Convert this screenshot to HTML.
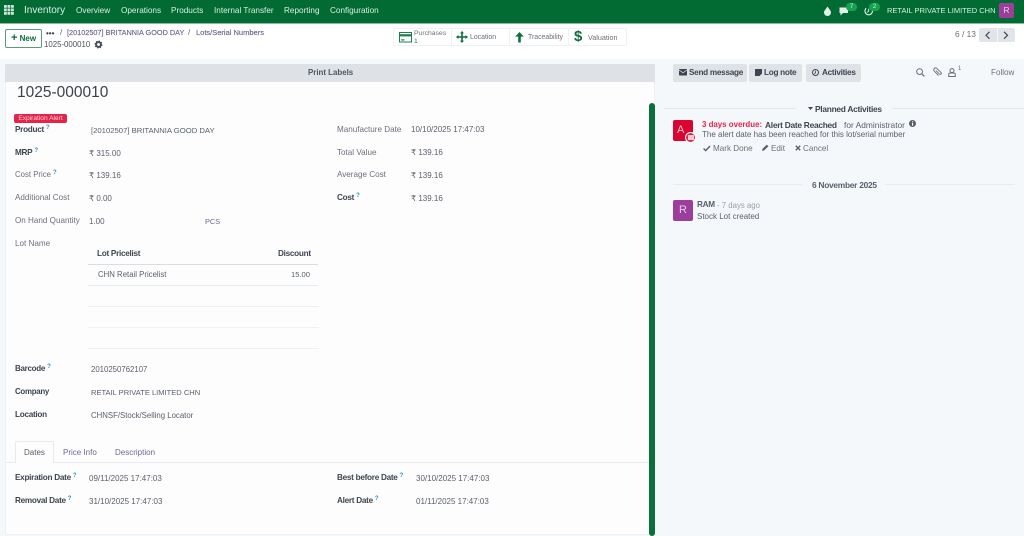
<!DOCTYPE html>
<html><head><meta charset="utf-8"><style>
html,body{margin:0;padding:0;width:1024px;height:536px;overflow:hidden;background:#f5f8fb;font-family:"Liberation Sans",sans-serif;font-size:8px;color:#5a606b}
.a,.t{position:absolute;white-space:nowrap}
.t{line-height:12px}
.k{margin-top:1px}
.b{font-weight:bold;color:#3f4550;font-size:8.2px;letter-spacing:-.28px}
.g{color:#6b7079;font-size:8.1px}
.n{color:#d9efe3;font-size:8.2px}
.c{color:#6f6791;font-size:7.3px;-webkit-text-stroke:.15px #6f6791}
.q{color:#2a8fbd;font-size:6px;font-weight:bold;position:relative;top:-3px;margin-left:2px;letter-spacing:0}
.l{position:absolute;height:1px}
.btn{position:absolute;background:#dfe3e7;border-radius:2px;height:18px;top:64px}
svg{position:absolute;overflow:visible}
</style></head><body>
<!-- navbar -->
<div class="a" style="left:0;top:0;width:1024px;height:23px;background:#026b34"></div>
<div class="l" style="left:0;top:23px;width:1024px;background:#8fb7a0"></div>
<svg style="left:4px;top:5px" width="10" height="10"><g fill="#cfe6d8"><rect x="0" y="0" width="2.8" height="2.8"/><rect x="3.5" y="0" width="2.8" height="2.8"/><rect x="7" y="0" width="2.8" height="2.8"/><rect x="0" y="3.5" width="2.8" height="2.8"/><rect x="3.5" y="3.5" width="2.8" height="2.8"/><rect x="7" y="3.5" width="2.8" height="2.8"/><rect x="0" y="7" width="2.8" height="2.8"/><rect x="3.5" y="7" width="2.8" height="2.8"/><rect x="7" y="7" width="2.8" height="2.8"/></g></svg>
<span class="t n" style="left:24px;top:5px;font-size:10px">Inventory</span>
<span class="t n" style="left:76px;top:5px">Overview</span>
<span class="t n" style="left:121px;top:5px">Operations</span>
<span class="t n" style="left:171px;top:5px">Products</span>
<span class="t n" style="left:214px;top:5px">Internal Transfer</span>
<span class="t n" style="left:284px;top:5px">Reporting</span>
<span class="t n" style="left:330px;top:5px">Configuration</span>
<svg style="left:824px;top:6px" width="8" height="10"><path d="M3.5 0.5C5 3 7 4.5 7 6.5A3.5 3.5 0 0 1 0 6.5C0 4.5 2 3 3.5 0.5Z" fill="#e4f1ea"/></svg>
<svg style="left:839px;top:6px" width="10" height="10"><path d="M0.5 1.5H9V7H4L1.5 9.5V7H0.5Z" fill="#e4f1ea"/></svg>
<div class="a" style="left:846px;top:3px;width:11px;height:8px;border-radius:4px;background:#14a34f;color:#d9efe3;font-size:6px;line-height:8px;text-align:center">7</div>
<svg style="left:864px;top:6px" width="10" height="10"><circle cx="4.7" cy="5" r="3.8" fill="none" stroke="#e4f1ea" stroke-width="1.1" stroke-dasharray="15 4"/><path d="M4.7 2.8V5.2L3 6.4" fill="none" stroke="#e4f1ea" stroke-width="0.9"/></svg>
<div class="a" style="left:869px;top:3px;width:11px;height:8px;border-radius:4px;background:#14a34f;color:#d9efe3;font-size:6px;line-height:8px;text-align:center">2</div>
<span class="t n" style="left:887px;top:5px;font-size:7.5px">RETAIL PRIVATE LIMITED CHN</span>
<div class="a" style="left:999px;top:3px;width:15px;height:15px;border-radius:2px;background:#9c3e9b;color:#e8cfe8;font-size:8.5px;line-height:15px;text-align:center">R</div>
<!-- control panel -->
<div class="a" style="left:0;top:24px;width:1024px;height:35px;background:#fff"></div>
<div class="a" style="left:5px;top:29px;width:37px;height:19px;box-sizing:border-box;border:1px solid #5b9a78;border-radius:2px;background:#fff;color:#0d6b3a;font-weight:bold;font-size:8px;line-height:17px;text-align:center"><span style="font-size:11px;line-height:10px">+</span> New</div>
<span class="t b" style="left:46px;top:28px;font-size:8px;letter-spacing:0">•••</span>
<span class="t" style="left:60px;top:27px;color:#666">/</span>
<span class="t c" style="left:67px;top:27px">[20102507] BRITANNIA GOOD DAY</span>
<span class="t" style="left:188px;top:27px;color:#666">/</span>
<span class="t c" style="left:196px;top:27px;font-size:7.5px">Lots/Serial Numbers</span>
<span class="t" style="left:44px;top:39px;font-size:7.85px;color:#4b515c">1025-000010</span>
<svg style="left:95px;top:41px" width="8" height="8"><circle cx="3.5" cy="3.5" r="2.4" fill="none" stroke="#454b55" stroke-width="1.9"/><circle cx="3.5" cy="3.5" r="3.5" fill="none" stroke="#454b55" stroke-width="1" stroke-dasharray="1.4 1.35"/></svg>
<!-- stat buttons -->
<div class="a" style="left:393px;top:28px;width:234px;height:18px;box-sizing:border-box;border:1px solid #eef1f4;border-radius:2px"></div>
<div class="a" style="left:451px;top:28px;width:1px;height:18px;background:#eef1f4"></div>
<div class="a" style="left:509px;top:28px;width:1px;height:18px;background:#eef1f4"></div>
<div class="a" style="left:568px;top:28px;width:1px;height:18px;background:#eef1f4"></div>
<svg style="left:399px;top:32px" width="13" height="11"><rect x="0.5" y="0.5" width="12" height="9.5" fill="none" stroke="#1c7c4c"/><rect x="0.5" y="2.2" width="12" height="2.2" fill="#1c7c4c"/><rect x="2" y="7.3" width="3.5" height="1.2" fill="#1c7c4c"/></svg>
<span class="t" style="left:414px;top:30px;font-size:6.8px;line-height:8px;color:#6b7079">Purchases<br><span style="color:#1c7c4c">1</span></span>
<svg style="left:456px;top:31px" width="12" height="12"><path d="M6 0L8 2.4H6.8V5.2H9.6V4L12 6L9.6 8V6.8H6.8V9.6H8L6 12L4 9.6H5.2V6.8H2.4V8L0 6L2.4 4V5.2H5.2V2.4H4Z" fill="#0f6d3e"/></svg>
<span class="t g" style="left:470px;top:32px;font-size:6.9px">Location</span>
<svg style="left:515px;top:32px" width="9" height="11"><path d="M4.5 0L8.8 4.6H5.8V10.5H3.2V4.6H0.2Z" fill="#0f6d3e"/></svg>
<span class="t g" style="left:528px;top:32px;font-size:6.9px">Traceability</span>
<span class="t" style="left:574px;top:29px;color:#0f6d3e;font-size:15px;line-height:16px;font-weight:bold">$</span>
<span class="t g" style="left:588px;top:32px;font-size:7.2px">Valuation</span>
<!-- pager -->
<span class="t g" style="left:955px;top:28px;font-size:8.4px">6 / 13</span>
<div class="a" style="left:979px;top:28px;width:36px;height:14px;background:#e1e5e9;border-radius:2px"></div>
<div class="a" style="left:997px;top:28px;width:1px;height:14px;background:#f4f6f8"></div>
<svg style="left:985px;top:31px" width="6" height="9"><path d="M4.5 0.8L1 4.3L4.5 7.8" fill="none" stroke="#454b55" stroke-width="1.2"/></svg>
<svg style="left:1003px;top:31px" width="6" height="9"><path d="M1 0.8L4.5 4.3L1 7.8" fill="none" stroke="#454b55" stroke-width="1.2"/></svg>
<!-- sheet -->
<div class="a" style="left:5px;top:64px;width:650px;height:471px;background:#fdfdfd;box-sizing:border-box;border:1px solid #eef0f3;border-top:0"></div>
<div class="a" style="left:5px;top:64px;width:650px;height:18px;background:#dee2e6;border-radius:2px 2px 0 0"></div>
<span class="t" style="left:308px;top:67px;font-weight:bold;color:#4f555f;font-size:7.9px">Print Labels</span>
<span class="t k" style="left:17px;top:82px;font-size:15.5px;line-height:20px;color:#3c424c">1025-000010</span>
<div class="a" style="left:14px;top:114px;width:53px;height:9px;border-radius:2px;background:#e8234a;color:#ffd9e0;font-size:6.6px;line-height:9px;text-align:center">Expiration Alert</div>
<!-- left group -->
<span class="t b" style="left:15px;top:124px">Product<span class="q">?</span></span>
<span class="t" style="left:91px;top:125px;font-size:7.7px">[20102507] BRITANNIA GOOD DAY</span>
<span class="t b" style="left:15px;top:147px">MRP<span class="q">?</span></span>
<span class="t" style="left:89px;top:148px">₹ 315.00</span>
<span class="t g" style="left:15px;top:169px;font-size:7.8px">Cost Price<span class="q">?</span></span>
<span class="t" style="left:89px;top:170px">₹ 139.16</span>
<span class="t g" style="left:15px;top:192px">Additional Cost</span>
<span class="t" style="left:89px;top:193px">₹ 0.00</span>
<span class="t g" style="left:15px;top:215px">On Hand Quantity</span>
<span class="t" style="left:89px;top:216px">1.00</span>
<span class="t" style="left:205px;top:216px;color:#6f6791;font-size:7.4px">PCS</span>
<span class="t g" style="left:15px;top:238px">Lot Name</span>
<!-- table -->
<span class="t b" style="left:97px;top:248px">Lot Pricelist</span>
<span class="t b" style="left:278px;top:248px">Discount</span>
<div class="l" style="left:88px;top:264px;width:230px;background:#d5dfe8"></div>
<span class="t" style="left:98px;top:269px;font-size:7.8px">CHN Retail Pricelist</span>
<span class="t" style="left:291px;top:269px;font-size:7.6px">15.00</span>
<div class="l" style="left:88px;top:285px;width:230px;background:#e6ebef"></div>
<div class="l" style="left:88px;top:306px;width:231px;background:#eceef1"></div>
<div class="l" style="left:88px;top:327px;width:231px;background:#f0f1f3"></div>
<div class="l" style="left:88px;top:348px;width:231px;background:#f0f1f3"></div>
<span class="t b" style="left:15px;top:363px;font-size:8px">Barcode<span class="q">?</span></span>
<span class="t" style="left:91px;top:364px;font-size:7.8px">2010250762107</span>
<span class="t b" style="left:15px;top:386px;font-size:7.9px">Company</span>
<span class="t" style="left:91px;top:387px;font-size:7.55px">RETAIL PRIVATE LIMITED CHN</span>
<span class="t b" style="left:15px;top:409px">Location</span>
<span class="t" style="left:91px;top:410px;font-size:7.8px">CHNSF/Stock/Selling Locator</span>
<!-- right group -->
<span class="t g" style="left:337px;top:124px">Manufacture Date</span>
<span class="t" style="left:411px;top:124px">10/10/2025 17:47:03</span>
<span class="t g" style="left:337px;top:147px">Total Value</span>
<span class="t" style="left:411px;top:147px">₹ 139.16</span>
<span class="t g" style="left:337px;top:169px">Average Cost</span>
<span class="t" style="left:411px;top:170px">₹ 139.16</span>
<span class="t b" style="left:337px;top:192px">Cost<span class="q">?</span></span>
<span class="t" style="left:411px;top:193px">₹ 139.16</span>
<!-- tabs -->
<div class="l" style="left:6px;top:462px;width:648px;background:#e9ebee"></div>
<div class="a" style="left:15px;top:441px;width:39px;height:22px;box-sizing:border-box;background:#fdfdfd;border:1px solid #e9ebee;border-bottom:0;border-radius:2px 2px 0 0"></div>
<span class="t k" style="left:24px;top:446px">Dates</span>
<span class="t k" style="left:63px;top:446px;color:#6f6791">Price Info</span>
<span class="t k" style="left:115px;top:446px;color:#6f6791">Description</span>
<span class="t b" style="left:15px;top:472px">Expiration Date<span class="q">?</span></span>
<span class="t" style="left:89px;top:473px">09/11/2025 17:47:03</span>
<span class="t b" style="left:15px;top:495px">Removal Date<span class="q">?</span></span>
<span class="t" style="left:89px;top:496px">31/10/2025 17:47:03</span>
<span class="t b" style="left:337px;top:472px">Best before Date<span class="q">?</span></span>
<span class="t" style="left:416px;top:473px">30/10/2025 17:47:03</span>
<span class="t b" style="left:337px;top:495px">Alert Date<span class="q">?</span></span>
<span class="t" style="left:416px;top:496px">01/11/2025 17:47:03</span>
<!-- scrollbar -->
<div class="a" style="left:649px;top:103px;width:6px;height:433px;background:#0a6f3a;border-radius:3px"></div>
<!-- chatter -->
<div class="btn" style="left:673px;width:74px"></div>
<svg style="left:679px;top:69px" width="8" height="7"><rect width="8" height="6.5" rx="0.6" fill="#3f4550"/><path d="M0 1L4 3.8L8 1" fill="none" stroke="#dfe3e7" stroke-width="0.7"/></svg>
<span class="t b" style="left:689px;top:67px">Send message</span>
<div class="btn" style="left:749px;width:53px"></div>
<svg style="left:755px;top:69px" width="7" height="7"><path d="M0 0H7V4.5L4.5 7H0Z" fill="#3f4550"/></svg>
<span class="t b" style="left:764px;top:67px">Log note</span>
<div class="btn" style="left:806px;width:55px"></div>
<svg style="left:812px;top:69px" width="7" height="7"><circle cx="3.5" cy="3.5" r="3" fill="none" stroke="#3f4550"/><path d="M3.6 1.6V3.8L2.2 4.6" fill="none" stroke="#3f4550" stroke-width=".8"/></svg>
<span class="t b" style="left:822px;top:67px">Activities</span>
<svg style="left:916px;top:68px" width="9" height="9"><circle cx="3.6" cy="3.6" r="2.9" fill="none" stroke="#6b7079" stroke-width="1"/><path d="M5.7 5.7L8.4 8.4" stroke="#6b7079" stroke-width="1.2"/></svg>
<svg style="left:933px;top:67px" width="10" height="10"><path d="M3 3.5L6.5 7.2A1.1 1.1 0 0 0 8 5.6L3.6 1.2A1.9 1.9 0 0 0 1 3.8L5.5 8.6" fill="none" stroke="#6b7079" stroke-width="0.9"/></svg>
<svg style="left:948px;top:68px" width="9" height="9"><circle cx="4" cy="2.6" r="2" fill="none" stroke="#6b7079"/><path d="M0.7 8.5V6.6Q0.7 5 2.4 5H5.6Q7.3 5 7.3 6.6V8.5Z" fill="none" stroke="#6b7079"/></svg>
<span class="a" style="left:958px;top:66px;font-size:6px;color:#6b7079">1</span>
<span class="t g" style="left:991px;top:67px">Follow</span>
<div class="l" style="left:664px;top:108px;width:132px;background:#e3e6ea"></div>
<div class="l" style="left:892px;top:108px;width:132px;background:#e3e6ea"></div>
<svg style="left:808px;top:107px" width="5" height="4"><path d="M0 0H5L2.5 3Z" fill="#3f4550"/></svg>
<span class="t b k" style="left:815px;top:102px;font-size:8.4px">Planned Activities</span>
<div class="a" style="left:673px;top:120px;width:20px;height:21px;border-radius:2px;background:#d9042f;color:#f5c5cf;font-size:11px;line-height:20px;text-indent:4px">A</div>
<div class="a" style="left:685px;top:132px;width:9px;height:9px;border-radius:50%;background:#e8234a;border:1px solid #fff"></div>
<div class="a" style="left:688px;top:135px;width:6px;height:5px;background:#f9c9d3"></div>
<span class="t k" style="left:702px;top:118px;font-weight:bold;color:#e8234a;font-size:7.9px">3 days overdue:</span>
<span class="t b k" style="left:765px;top:118px;font-size:8.4px">Alert Date Reached</span>
<span class="t k" style="left:844px;top:118px;font-size:8.4px">for Administrator</span>
<svg style="left:909px;top:120px" width="7" height="7"><circle cx="3.5" cy="3.5" r="3.5" fill="#5a606b"/><rect x="3" y="3" width="1.1" height="2.6" fill="#fff"/><rect x="3" y="1.3" width="1.1" height="1.1" fill="#fff"/></svg>
<span class="t k" style="left:702px;top:128px">The alert date has been reached for this lot/serial number</span>
<svg style="left:703px;top:145px" width="8" height="7"><path d="M0.6 3.5L2.7 5.6L7 1" fill="none" stroke="#5a606b" stroke-width="1.4"/></svg>
<span class="t g k" style="left:713px;top:142px">Mark Done</span>
<svg style="left:762px;top:144px" width="7" height="7"><path d="M0 7L0.6 4.8L4.8 0.6L6.4 2.2L2.2 6.4Z" fill="#5a606b"/></svg>
<span class="t g k" style="left:771px;top:142px">Edit</span>
<svg style="left:795px;top:145px" width="6" height="6"><path d="M0.8 0.8L5.2 5.2M5.2 0.8L0.8 5.2" stroke="#5a606b" stroke-width="1.4"/></svg>
<span class="t g k" style="left:803px;top:142px">Cancel</span>
<div class="l" style="left:673px;top:184px;width:129px;background:#e9ecef"></div>
<div class="l" style="left:885px;top:184px;width:130px;background:#e9ecef"></div>
<span class="t b k" style="left:812px;top:178px;font-size:8.4px;color:#5a606b">6 November 2025</span>
<div class="a" style="left:673px;top:200px;width:20px;height:21px;border-radius:2px;background:#9c3e9b;color:#e8cfe8;font-size:11px;line-height:21px;text-align:center">R</div>
<span class="t b k" style="left:697px;top:198px;color:#5a606b">RAM</span>
<span class="t k" style="left:717px;top:199px;color:#9a9ea5;font-size:7.8px">- 7 days ago</span>
<span class="t k" style="left:697px;top:210px;font-size:8px">Stock Lot created</span>
</body></html>
